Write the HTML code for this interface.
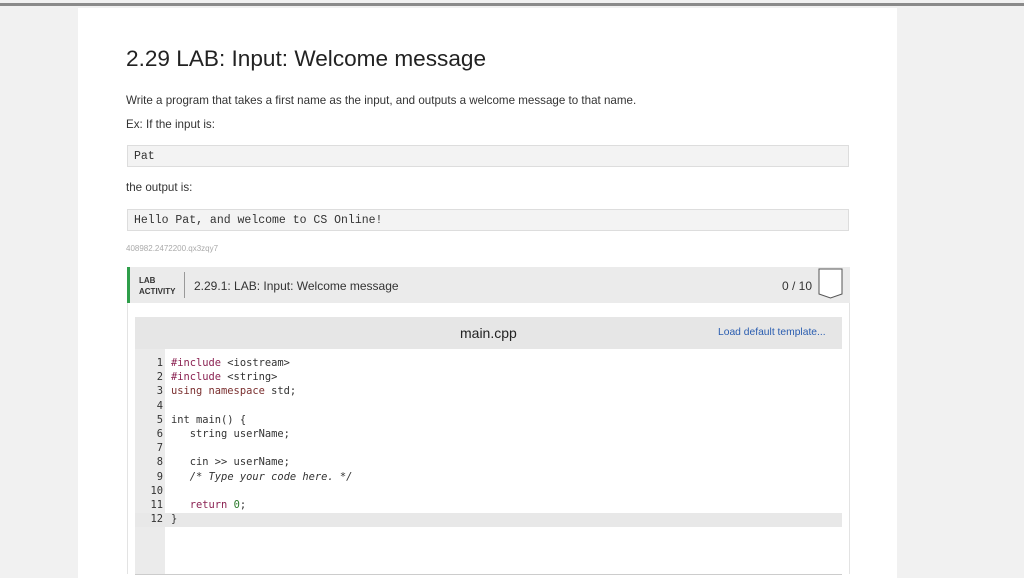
<html><head><style>
body{margin:0;width:1024px;height:574px;background:#f1f1f1;font-family:"Liberation Sans",sans-serif;position:relative;overflow:hidden}
.top{position:absolute;left:0;top:3px;width:1024px;height:3px;background:#8a8a8a}
.card{position:absolute;left:78px;top:8px;width:819px;height:570px;background:#fff}
.a{position:absolute;white-space:nowrap}
.box{position:absolute;left:127px;width:720px;height:22px;background:#f3f3f3;border:1px solid #ddd;font-family:"Liberation Mono",monospace;font-size:11.5px;line-height:22px;padding-left:6px;box-sizing:border-box;color:#333}
.code{font-family:"DejaVu Sans Mono",monospace;font-size:10.4px;line-height:14.2px}
</style></head><body>
<div class="top"></div>
<div class="card"></div>
<div class="a" style="left:126px;top:46px;font-size:22.6px;color:#222">2.29 LAB: Input: Welcome message</div>
<div class="a" style="left:126px;top:94px;font-size:11.6px;color:#333">Write a program that takes a first name as the input, and outputs a welcome message to that name.</div>
<div class="a" style="left:126px;top:118px;font-size:11.6px;color:#333">Ex: If the input is:</div>
<div class="box" style="top:145px;width:722px">Pat</div>
<div class="a" style="left:126px;top:181px;font-size:11.6px;color:#333">the output is:</div>
<div class="box" style="top:209px;width:722px">Hello Pat, and welcome to CS Online!</div>
<div class="a" style="left:126px;top:244px;font-size:8px;color:#aaa">408982.2472200.qx3zqy7</div>
<div class="a" style="left:127px;top:267px;width:723px;height:36px;background:#ebebeb;border-left:3px solid #2e9e4a;box-sizing:border-box"></div>
<div class="a" style="left:139px;top:275px;font-size:8px;font-weight:bold;line-height:11px;color:#333">LAB<br>ACTIVITY</div>
<div class="a" style="left:184px;top:272px;width:1px;height:26px;background:#999"></div>
<div class="a" style="left:194px;top:279px;font-size:12px;color:#333">2.29.1: LAB: Input: Welcome message</div>
<div class="a" style="left:782px;top:279px;font-size:12px;color:#333">0 / 10</div>
<svg class="a" style="left:818px;top:268px" width="26" height="32"><path d="M1 1H24V26L12.5 30L1 26Z" fill="#fff" stroke="#555" stroke-width="1"/></svg>
<div class="a" style="left:127px;top:303px;width:723px;height:271px;border-left:1px solid #e3e3e3;border-right:1px solid #e3e3e3;box-sizing:border-box"></div>
<div class="a" style="left:135px;top:317px;width:707px;height:32px;background:#e6e6e6"></div>
<div class="a" style="left:460px;top:325px;font-size:14px;color:#222">main.cpp</div>
<div class="a" style="left:718px;top:327px;font-size:10.3px;color:#2a5db0">Load default template...</div>
<div class="a" style="left:135px;top:349px;width:30px;height:225px;background:#ebebeb"></div>
<div class="a" style="left:135px;top:513px;width:707px;height:14px;background:#e8e8e8"></div>
<div class="a" style="left:135px;top:574px;width:707px;height:1px;background:#ccc"></div>
<div class="a code" style="left:138px;top:356px;width:25px;text-align:right;color:#333">1<br>2<br>3<br>4<br>5<br>6<br>7<br>8<br>9<br>10<br>11<br>12</div>
<div class="a code" style="left:171px;top:356px;color:#333;white-space:pre"><span style="color:#8b2252">#include</span> &lt;iostream&gt;
<span style="color:#8b2252">#include</span> &lt;string&gt;
<span style="color:#7a2f2f">using namespace</span> std;

int main() {
   string userName;

   cin &gt;&gt; userName;
   <i>/* Type your code here. */</i>

   <span style="color:#8b2252">return</span> <span style="color:#2a7a2a">0</span>;
}</div>
</body></html>
